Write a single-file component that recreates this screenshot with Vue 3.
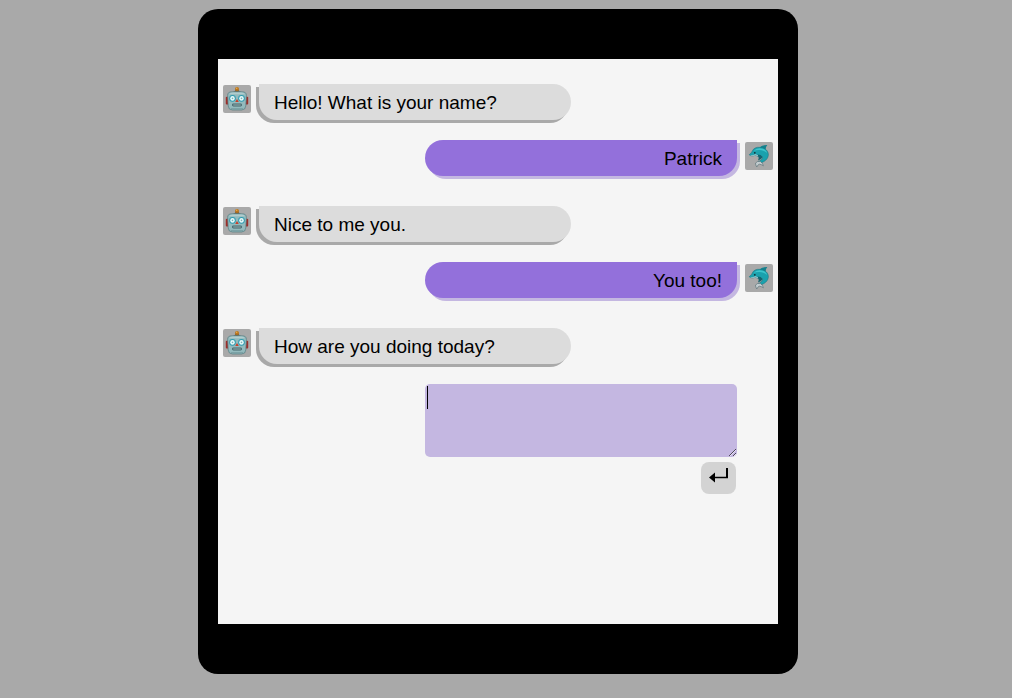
<script setup>
import { ref } from 'vue'

const messages = ref([
  { from: 'bot', text: 'Hello! What is your name?' },
  { from: 'user', text: 'Patrick' },
  { from: 'bot', text: 'Nice to me you.' },
  { from: 'user', text: 'You too!' },
  { from: 'bot', text: 'How are you doing today?' }
])
const draft = ref('')

function send() {
  const text = draft.value.trim()
  if (!text) return
  messages.value.push({ from: 'user', text })
  draft.value = ''
}
</script>

<template>
  <div class="page">
    <main class="tablet">
      <div class="screen">
        <div v-for="(m, i) in messages" :key="i" class="row" :class="m.from">
          <span class="avatar">
            <svg v-if="m.from === 'bot'" viewBox="0 0 28 28" aria-hidden="true">
              <path d="M9.5 7.4Q10.5 5.4 14 5.4T18.5 7.4Z" fill="#5f7478" />
              <path d="M12.3 4.6h3.4v2.2h-3.4z" fill="#6b4c26" />
              <circle cx="14" cy="3.9" r="2" fill="#b8741f" />
              <circle cx="13.7" cy="3.3" r=".8" fill="#edae45" />
              <rect x="2.8" y="11.8" width="3.2" height="7.6" rx="1" fill="#9c2f2b" />
              <rect x="22" y="11.8" width="3.2" height="7.6" rx="1" fill="#9c2f2b" />
              <path d="M4.6 10.5Q4.6 6.8 8.8 6.8h10.4Q23.4 6.8 23.4 10.5L22.8 21Q22.5 25 18.5 25h-9Q5.5 25 5.2 21Z" fill="#93babd" stroke="#567b80" stroke-width=".7" />
              <path d="M6 9.3Q7 7.6 9.5 7.6h9Q21 7.6 22 9.3Z" fill="#b2cdce" />
              <circle cx="9.5" cy="13.4" r="3.3" fill="#2f9bb0" />
              <circle cx="18.5" cy="13.4" r="3.3" fill="#2f9bb0" />
              <circle cx="9.5" cy="13.4" r="2.3" fill="#e9fbfa" />
              <circle cx="18.5" cy="13.4" r="2.3" fill="#e9fbfa" />
              <circle cx="9.5" cy="13.4" r=".8" fill="#7fb0b6" />
              <circle cx="18.5" cy="13.4" r=".8" fill="#7fb0b6" />
              <path d="M14 14l1.8 3h-3.6z" fill="#c5402a" />
              <rect x="9" y="18.5" width="10" height="3" rx="1.4" fill="#45666c" />
              <path d="M10.2 20h7.6" stroke="#9fbabb" stroke-width=".9" />
              <path d="M8 23.8h12" stroke="#6a9094" stroke-width=".8" />
            </svg>
            <svg v-else viewBox="0 0 28 28" aria-hidden="true">
              <path d="M14.5 5.6Q17.5 2.8 22.3 3Q20.2 5.4 20.8 8.2Z" fill="#14818d" />
              <path d="M4.2 12.7C5 11.4 6.5 11.2 7.2 9.2C8.4 6.1 11.6 4.9 15 5.3C20.5 5.8 23.9 9.2 23.3 13.5C22.8 17.4 19.3 20 15 21L12.8 20C16 18.4 18 16.8 17.4 14.8C14.8 14.9 12.3 14.3 10.5 13.2C8.5 14.1 5.5 14.4 4.2 12.7Z" fill="#1ba1ad" stroke="#176f7a" stroke-width=".5" />
              <path d="M5 13.3Q8.5 13.2 10.6 12.3Q13.2 14 16.6 13.9Q13.3 14.8 10.5 13.3Q7.8 14.4 5 13.3Z" fill="#b4ccd0" />
              <path d="M12.6 12.6Q16.2 12.6 17.6 15Q16.2 18 13 18.6Q14.4 15.8 12.6 12.6Z" fill="#15646f" />
              <path d="M8.6 8.9Q11.3 5.8 16 6.4Q20.5 7 22.2 11Q18 7.9 14 8Q10.7 8.1 8.6 8.9Z" fill="#3cc5cc" />
              <path d="M15.4 19.4Q12.3 18.8 10.5 21Q10.4 22.9 11.8 25Q12.6 22.9 14.2 22.2Q16.5 22.4 18.4 23.8Q18.1 21.4 15.4 19.4Z" fill="#c2cccf" stroke="#61757b" stroke-width=".7" />
              <circle cx="9.8" cy="10.8" r=".9" fill="#0e2d33" />
            </svg>
          </span>
          <p class="bubble">{{ m.text }}</p>
        </div>

        <form class="reply" @submit.prevent="send">
          <div class="field">
            <textarea v-model="draft" rows="3" aria-label="Your reply"></textarea>
            <span v-if="!draft" class="caret" aria-hidden="true"></span>
          </div>
          <button type="submit" aria-label="Send">
            <svg viewBox="0 0 21 18" aria-hidden="true">
              <path d="M19 1v9.5" fill="none" stroke="#000" stroke-width="2" />
              <path d="M20 10.5H6" fill="none" stroke="#000" stroke-width="1.5" />
              <path d="M1 10.5l6-5v10z" fill="#000" />
            </svg>
          </button>
        </form>
      </div>
    </main>
  </div>
</template>

<style>
html {
  background: #a9a9a9;
}
</style>

<style scoped>
.page {
  box-sizing: border-box;
  min-height: 100vh;
  padding: 9px 16px 24px 0;
  background: #a9a9a9;
  font-family: "Liberation Sans", Arial, sans-serif;
  font-size: 19px;
  line-height: 22px;
  color: #000;
}

.tablet {
  box-sizing: border-box;
  max-width: 600px;
  margin: 0 auto;
  padding: 50px 20px;
  border-radius: 20px;
  background: #000;
}

.screen {
  box-sizing: border-box;
  min-height: 565px;
  padding: 25px 5px;
  background: #f5f5f5;
}

.row {
  display: flex;
  align-items: flex-start;
  gap: 8px;
  margin-bottom: 20px;
}

.row.user {
  flex-direction: row-reverse;
  margin-bottom: 30px;
}

.avatar {
  flex: none;
  width: 28px;
  height: 28px;
  margin-top: 1px;
  border-radius: 2px;
  background: #a9a9a9;
}

.user .avatar {
  margin-top: 2px;
}

.avatar svg {
  display: block;
}

.bubble {
  box-sizing: border-box;
  flex: 1 1 auto;
  max-width: 312px;
  margin: 0;
  padding: 8px 15px 6px;
  border-radius: 0 20px 20px 20px;
  background: #dcdcdc;
  box-shadow: -3px 3px 0 #a9a9a9;
}

.user .bubble {
  border-radius: 20px 0 20px 20px;
  background: #9370db;
  box-shadow: 3px 3px 0 #c4b7e1;
  text-align: right;
}

.reply {
  display: flex;
  flex-direction: column;
  align-items: flex-end;
  gap: 5px;
  padding-right: 36px;
}

.field {
  position: relative;
  width: 100%;
  max-width: 312px;
}

textarea {
  display: block;
  box-sizing: border-box;
  width: 100%;
  padding: 2px;
  border: 0;
  border-radius: 5px;
  outline: 0;
  background: #c4b7e1;
  font: inherit;
  line-height: 23px;
}

.caret {
  position: absolute;
  top: 2px;
  left: 2px;
  width: 1px;
  height: 23px;
  background: #000;
}

button {
  display: flex;
  align-items: flex-start;
  justify-content: center;
  width: 35px;
  height: 32px;
  margin-right: 1px;
  padding: 5px 0;
  border: 0;
  border-radius: 8px;
  background: #d3d3d3;
}

button svg {
  width: 21px;
  height: 18px;
}
</style>
